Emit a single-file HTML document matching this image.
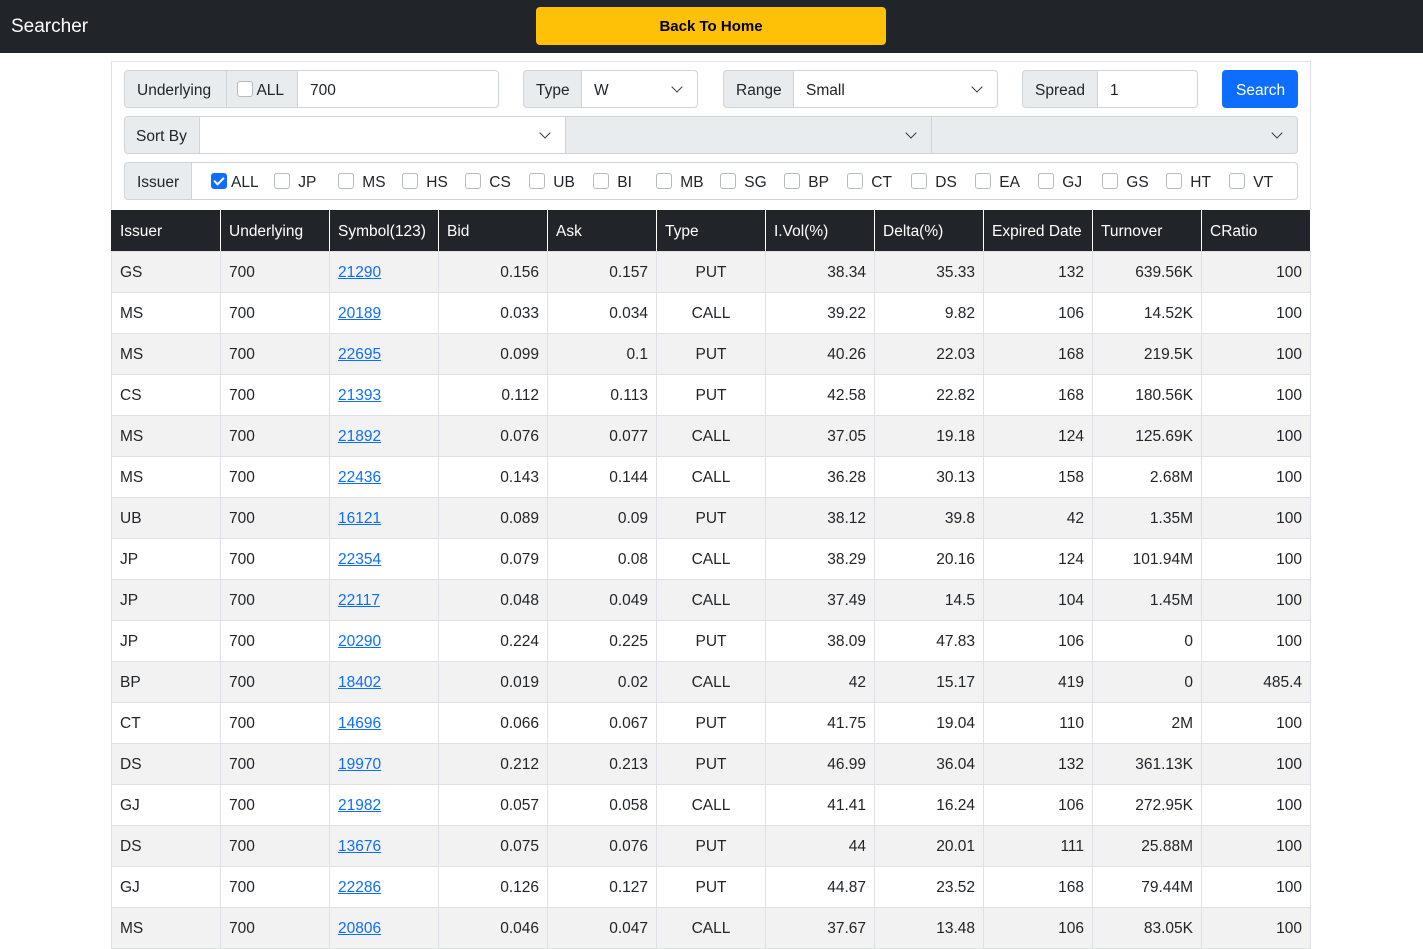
<!DOCTYPE html>
<html><head><meta charset="utf-8"><style>
*{box-sizing:border-box;margin:0;padding:0}
body{width:1423px;height:931px;overflow:hidden;background:#fff;font-family:"Liberation Sans",sans-serif;font-size:15px;color:#212529;position:relative}
.nav{position:absolute;left:0;top:0;width:1423px;height:53px;background:#212529}
.brand{position:absolute;left:11px;top:16px;color:#fff;font-size:19px}
.home{position:absolute;left:536px;top:7px;width:350px;height:38px;background:#ffc107;border-radius:4px;text-align:center;line-height:40px;font-weight:bold;font-size:15px;color:#000}
.box{position:absolute;left:111px;top:61px;width:1200px;height:149px;border:1px solid #dee2e6;border-bottom:none}
.a{position:absolute;height:38px;line-height:39px;border:1px solid #ced4da;padding:0 12px;font-size:15.5px;white-space:nowrap;overflow:hidden}
.lbl{background:#e9ecef}
.sel::after{content:"";position:absolute;right:16px;top:12px;width:7px;height:7px;border-right:1.6px solid #343a40;border-bottom:1.6px solid #343a40;transform:rotate(45deg)}
.cb{display:inline-block;width:16px;height:16px;border:1px solid #b5bbc1;border-radius:3px;vertical-align:-2px;background:#fff}
.cb.on{background:#0d6efd;border-color:#0d6efd;position:relative}
.cb.on::after{content:"";position:absolute;left:4px;top:1px;width:4px;height:8px;border-right:2px solid #fff;border-bottom:2px solid #fff;transform:rotate(45deg)}
.iss{position:absolute;top:173px;font-size:15.5px;line-height:18px;white-space:nowrap}
.iss .cb{margin-right:4px}
table{position:absolute;left:111px;top:210px;border-collapse:collapse;width:1199px;table-layout:fixed}
td,th{width:109px;height:41px;border:1px solid #dee2e6;padding:3px 8px 0;font-size:15.5px;font-weight:normal;white-space:nowrap;overflow:hidden}
th{background:#212529;color:#fff;text-align:left;border-color:#dee2e6 #fff;border-top:none}
th:first-child{border-left-color:#212529}
tbody tr:nth-child(odd) td{background:#f2f2f2}
td:nth-child(n+4){text-align:right}
td:nth-child(6){text-align:center}
a{color:#0d6efd;text-decoration:underline}
</style></head><body>
<div class="nav"><div class="brand">Searcher</div><div class="home">Back To Home</div></div>
<div class="box"></div>
<div class="a lbl" style="left:124px;top:70px;width:103px;border-radius:4px 0 0 4px">Underlying</div>
<div class="a lbl" style="left:226px;top:70px;width:72px;padding:0 10px"><span class="cb"></span> ALL</div>
<div class="a" style="left:297px;top:70px;width:202px;border-radius:0 4px 4px 0">700</div>
<div class="a lbl" style="left:523px;top:70px;width:59px;border-radius:4px 0 0 4px">Type</div>
<div class="a sel" style="left:581px;top:70px;width:117px;border-radius:0 4px 4px 0">W</div>
<div class="a lbl" style="left:723px;top:70px;width:71px;border-radius:4px 0 0 4px">Range</div>
<div class="a sel" style="left:793px;top:70px;width:205px;border-radius:0 4px 4px 0">Small</div>
<div class="a lbl" style="left:1022px;top:70px;width:76px;border-radius:4px 0 0 4px">Spread</div>
<div class="a" style="left:1097px;top:70px;width:101px;border-radius:0 4px 4px 0">1</div>
<div class="a" style="left:1222px;top:70px;width:76px;background:#0d6efd;border-color:#0d6efd;color:#fff;border-radius:4px;padding:0 13px">Search</div>
<div class="a lbl" style="left:124px;top:116px;width:76px;border-radius:4px 0 0 4px;padding:0 11px">Sort By</div>
<div class="a sel" style="left:199px;top:116px;width:367px"></div>
<div class="a sel lbl" style="left:565px;top:116px;width:367px"></div>
<div class="a sel lbl" style="left:931px;top:116px;width:367px;border-radius:0 4px 4px 0"></div>
<div class="a lbl" style="left:124px;top:162px;width:68px;border-radius:4px 0 0 4px">Issuer</div>
<div class="a" style="left:191px;top:162px;width:1107px;border-radius:0 4px 4px 0"></div>
<div class="iss" style="left:211px"><span class="cb on"></span>ALL</div>
<div class="iss" style="left:274px"><span class="cb"></span> JP</div>
<div class="iss" style="left:338px"><span class="cb"></span> MS</div>
<div class="iss" style="left:402px"><span class="cb"></span> HS</div>
<div class="iss" style="left:465px"><span class="cb"></span> CS</div>
<div class="iss" style="left:529px"><span class="cb"></span> UB</div>
<div class="iss" style="left:593px"><span class="cb"></span> BI</div>
<div class="iss" style="left:656px"><span class="cb"></span> MB</div>
<div class="iss" style="left:720px"><span class="cb"></span> SG</div>
<div class="iss" style="left:784px"><span class="cb"></span> BP</div>
<div class="iss" style="left:847px"><span class="cb"></span> CT</div>
<div class="iss" style="left:911px"><span class="cb"></span> DS</div>
<div class="iss" style="left:975px"><span class="cb"></span> EA</div>
<div class="iss" style="left:1038px"><span class="cb"></span> GJ</div>
<div class="iss" style="left:1102px"><span class="cb"></span> GS</div>
<div class="iss" style="left:1166px"><span class="cb"></span> HT</div>
<div class="iss" style="left:1229px"><span class="cb"></span> VT</div>
<table><thead><tr><th>Issuer</th><th>Underlying</th><th>Symbol(123)</th><th>Bid</th><th>Ask</th><th>Type</th><th>I.Vol(%)</th><th>Delta(%)</th><th>Expired Date</th><th>Turnover</th><th>CRatio</th></tr></thead>
<tbody>
<tr><td>GS</td><td>700</td><td><a>21290</a></td><td>0.156</td><td>0.157</td><td>PUT</td><td>38.34</td><td>35.33</td><td>132</td><td>639.56K</td><td>100</td></tr>
<tr><td>MS</td><td>700</td><td><a>20189</a></td><td>0.033</td><td>0.034</td><td>CALL</td><td>39.22</td><td>9.82</td><td>106</td><td>14.52K</td><td>100</td></tr>
<tr><td>MS</td><td>700</td><td><a>22695</a></td><td>0.099</td><td>0.1</td><td>PUT</td><td>40.26</td><td>22.03</td><td>168</td><td>219.5K</td><td>100</td></tr>
<tr><td>CS</td><td>700</td><td><a>21393</a></td><td>0.112</td><td>0.113</td><td>PUT</td><td>42.58</td><td>22.82</td><td>168</td><td>180.56K</td><td>100</td></tr>
<tr><td>MS</td><td>700</td><td><a>21892</a></td><td>0.076</td><td>0.077</td><td>CALL</td><td>37.05</td><td>19.18</td><td>124</td><td>125.69K</td><td>100</td></tr>
<tr><td>MS</td><td>700</td><td><a>22436</a></td><td>0.143</td><td>0.144</td><td>CALL</td><td>36.28</td><td>30.13</td><td>158</td><td>2.68M</td><td>100</td></tr>
<tr><td>UB</td><td>700</td><td><a>16121</a></td><td>0.089</td><td>0.09</td><td>PUT</td><td>38.12</td><td>39.8</td><td>42</td><td>1.35M</td><td>100</td></tr>
<tr><td>JP</td><td>700</td><td><a>22354</a></td><td>0.079</td><td>0.08</td><td>CALL</td><td>38.29</td><td>20.16</td><td>124</td><td>101.94M</td><td>100</td></tr>
<tr><td>JP</td><td>700</td><td><a>22117</a></td><td>0.048</td><td>0.049</td><td>CALL</td><td>37.49</td><td>14.5</td><td>104</td><td>1.45M</td><td>100</td></tr>
<tr><td>JP</td><td>700</td><td><a>20290</a></td><td>0.224</td><td>0.225</td><td>PUT</td><td>38.09</td><td>47.83</td><td>106</td><td>0</td><td>100</td></tr>
<tr><td>BP</td><td>700</td><td><a>18402</a></td><td>0.019</td><td>0.02</td><td>CALL</td><td>42</td><td>15.17</td><td>419</td><td>0</td><td>485.4</td></tr>
<tr><td>CT</td><td>700</td><td><a>14696</a></td><td>0.066</td><td>0.067</td><td>PUT</td><td>41.75</td><td>19.04</td><td>110</td><td>2M</td><td>100</td></tr>
<tr><td>DS</td><td>700</td><td><a>19970</a></td><td>0.212</td><td>0.213</td><td>PUT</td><td>46.99</td><td>36.04</td><td>132</td><td>361.13K</td><td>100</td></tr>
<tr><td>GJ</td><td>700</td><td><a>21982</a></td><td>0.057</td><td>0.058</td><td>CALL</td><td>41.41</td><td>16.24</td><td>106</td><td>272.95K</td><td>100</td></tr>
<tr><td>DS</td><td>700</td><td><a>13676</a></td><td>0.075</td><td>0.076</td><td>PUT</td><td>44</td><td>20.01</td><td>111</td><td>25.88M</td><td>100</td></tr>
<tr><td>GJ</td><td>700</td><td><a>22286</a></td><td>0.126</td><td>0.127</td><td>PUT</td><td>44.87</td><td>23.52</td><td>168</td><td>79.44M</td><td>100</td></tr>
<tr><td>MS</td><td>700</td><td><a>20806</a></td><td>0.046</td><td>0.047</td><td>CALL</td><td>37.67</td><td>13.48</td><td>106</td><td>83.05K</td><td>100</td></tr>
</tbody></table>
</body></html>
